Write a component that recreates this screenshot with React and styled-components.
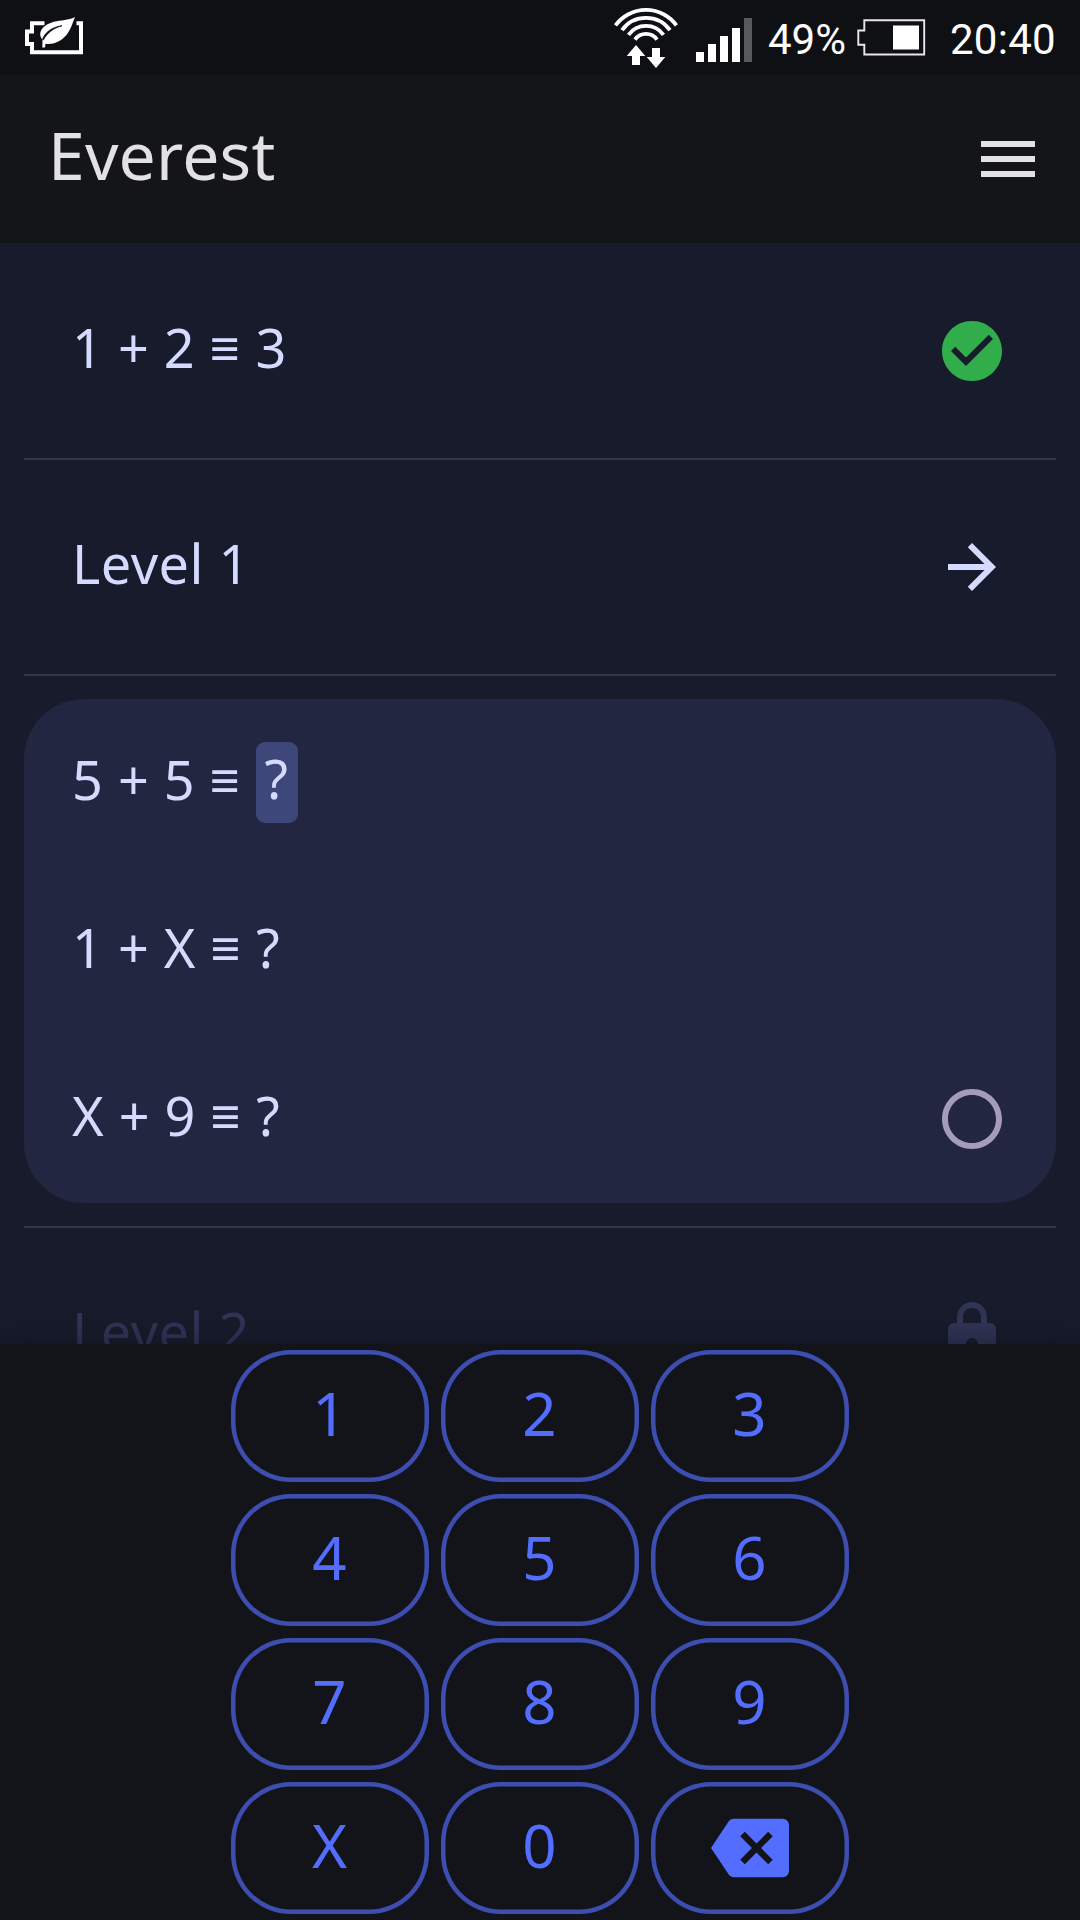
import React from 'react';
import styled, { createGlobalStyle } from 'styled-components';

const GlobalStyle = createGlobalStyle`
  * { box-sizing: border-box; }
  body { margin: 0; background: #131419; }
  svg { display: block; }
`;

const Screen = styled.div`
  width: 1080px;
  height: 1920px;
  overflow: hidden;
  display: flex;
  flex-direction: column;
  background: #181b2b;
  font-family: 'Noto Sans', 'Open Sans', sans-serif;
`;

const StatusBar = styled.div`
  flex: none;
  height: 75px;
  padding: 0 24px 0 24px;
  display: flex;
  align-items: flex-start;
  justify-content: space-between;
  background: #0f1014;
  color: #fff;
`;

const StatusGroup = styled.div`
  display: flex;
  align-items: flex-start;
`;

const StatusText = styled.span`
  font: 400 42px/50px Roboto, sans-serif;
  letter-spacing: ${(p) => p.$tracking || 0}px;
  margin: 15px ${(p) => p.$after || 0}px 0 ${(p) => p.$before}px;
  white-space: pre;
`;

const AppBar = styled.header`
  flex: none;
  height: 168px;
  padding: 0 36px 0 48px;
  display: flex;
  align-items: center;
  justify-content: space-between;
  background: #141519;
`;

const Title = styled.h1`
  margin: 0 0 11px;
  font-size: 66px;
  font-weight: 400;
  line-height: 90px;
  letter-spacing: 0.2px;
  color: #e3e2e3;
`;

const List = styled.main`
  flex: 1;
  min-height: 0;
  overflow: hidden;
`;

const Row = styled.div`
  height: ${(p) => (p.$nested ? 168 : 216)}px;
  padding: 0 48px;
  margin: 0 ${(p) => (p.$nested ? 0 : 24)}px;
  display: flex;
  align-items: center;
  justify-content: space-between;
  color: ${(p) => (p.$locked ? '#303455' : '#d5dbff')};
`;

const Label = styled.span`
  font-size: 54px;
  line-height: 74px;
  letter-spacing: 0.5px;
  padding-bottom: 8px;
  white-space: pre;
`;

const Equiv = styled.span`
  font-size: 51px;
  line-height: 0;
  margin: 0 0.7px 0 0.3px;
  vertical-align: 2px;
`;

const Cursor = styled.span`
  display: inline-block;
  height: 81px;
  line-height: 74px;
  padding: 0 9px;
  margin: 0 0 -7px;
  border-radius: 9px;
  background: #3e4779;
  vertical-align: top;
`;

const CursorText = styled.span`
  display: block;
  margin-top: -1px;
`;

const Divider = styled.div`
  height: 2px;
  margin: -1px 24px;
  background: #343646;
`;

const Card = styled.section`
  margin: 24px;
  border-radius: 60px;
  background: #232640;
`;

const Keypad = styled.footer`
  flex: none;
  height: 576px;
  padding: 6px 0;
  display: grid;
  grid-template-columns: repeat(3, 198px);
  grid-auto-rows: 132px;
  gap: 12px;
  justify-content: center;
  background: #131419;
  box-shadow: 0 0 24px rgba(10, 11, 24, 0.5);
`;

const Key = styled.button`
  border: 0;
  padding: 0 1px 7px 0;
  display: flex;
  align-items: center;
  justify-content: center;
  border-radius: 60px;
  background: transparent;
  box-shadow: inset 0 0 0 4.5px #3e4eb0;
  color: #536dfe;
  font: 400 60px/82px 'Noto Sans', 'Open Sans', sans-serif;
`;

const KeyIcon = styled.span`
  margin: 0 -1px -7px 0;
`;

const ICONS = {
  menu: 'M3 18h18v-2H3v2zm0-5h18v-2H3v2zm0-7v2h18V6H3z',
  check:
    'M12 2C6.48 2 2 6.48 2 12s4.48 10 10 10 10-4.48 10-10S17.52 2 12 2zm-2 15l-5-5 1.41-1.41L10 14.17l7.59-7.59L19 8l-9 9z',
  arrow: 'M12 4l-1.41 1.41L16.17 11H4v2h12.17l-5.58 5.59L12 20l8-8z',
  circle:
    'M12 2C6.48 2 2 6.48 2 12s4.48 10 10 10 10-4.48 10-10S17.52 2 12 2zm0 18c-4.42 0-8-3.58-8-8s3.58-8 8-8 8 3.58 8 8-3.58 8-8 8z',
  lock: 'M18 8h-1V6c0-2.76-2.24-5-5-5S7 3.24 7 6v2H6c-1.1 0-2 .9-2 2v10c0 1.1.9 2 2 2h12c1.1 0 2-.9 2-2V10c0-1.1-.9-2-2-2zm-6 9c-1.1 0-2-.9-2-2s.9-2 2-2 2 .9 2 2-.9 2-2 2zM9 8V6c0-1.66 1.34-3 3-3s3 1.34 3 3v2H9z',
  backspace:
    'M22 3H7c-.69 0-1.23.35-1.59.88L0 12l5.41 8.11c.36.53.9.89 1.59.89h15c1.1 0 2-.9 2-2V5c0-1.1-.9-2-2-2zm-3 12.59L17.59 17 14 13.41 10.41 17 9 15.59 12.59 12 9 8.41 10.41 7 14 10.59 17.59 7 19 8.41 15.41 12 19 15.59z',
};

const Icon = ({ name, color = 'currentColor', size = 72 }) => (
  <svg width={size} height={size} viewBox="0 0 24 24" fill={color}>
    <path d={ICONS[name]} />
  </svg>
);

const PowerSaver = () => (
  <svg width="60" height="75" viewBox="24 0 60 75" fill="none">
    <path d="M44.500 23.200H32V31.500H27V44H32V52.200H81V23.200H76.500" stroke="#fff" strokeWidth="4" />
    <path
      d="M75 17C68 20.500 61 20 54 21.800C44 24.500 39 30 40.500 36.500L42.500 40L42.300 47.500H45L45.500 43.800C53 44.800 60 42 66 35.500C70.500 30.500 72.500 23 75 17Z"
      fill="#fff"
      stroke="#0f1014"
      strokeWidth="1.6"
      paintOrder="stroke"
    />
    <path d="M42.500 39.500C45 32.500 51 27.500 62 25.700C53 28.500 47.500 32.500 43.500 39.800Z" fill="#0f1014" stroke="#0f1014" strokeWidth="0.8" />
  </svg>
);

const arc = (r) => `M${646 - 0.81 * r} ${47.6 - 0.59 * r}A${r} ${r} 0 0 1 ${646 + 0.81 * r} ${47.6 - 0.59 * r}`;

const Wifi = () => (
  <svg width="66" height="75" viewBox="613 0 66 75">
    <g fill="none" stroke="#fff" strokeWidth="3.8">
      {[37.6, 29.6, 21.6, 13.6].map((r) => (
        <path key={r} d={arc(r)} />
      ))}
    </g>
    <path d="M636 45L645.300 56H640V65H632V56H626.700ZM652 48H660V57H665.300L656 68L646.700 57H652Z" fill="#fff" />
  </svg>
);

const Signal = () => (
  <svg width="73" height="75" viewBox="679 0 73 75" fill="#fff">
    <path d="M696 52h8v10h-8zM708 44h8v18h-8zM720 36h8v26h-8zM732 28h8v34h-8z" />
    <path d="M744 18h8v44h-8z" fill="#58595c" />
  </svg>
);

const Battery = () => (
  <svg width="70" height="75" viewBox="856 0 70 75">
    <path d="M864.300 20.300H924.200V54.500H864.300V44.700H858.300V30.500H864.300Z" fill="none" stroke="#e9e7ea" strokeWidth="1.9" />
    <path d="M893 25.500h26v24h-26z" fill="#fff" />
  </svg>
);

const Equation = ({ left, right, active }) => (
  <Label>
    {left} <Equiv>≡</Equiv>{' '}
    {active ? (
      <Cursor>
        <CursorText>{right}</CursorText>
      </Cursor>
    ) : (
      right
    )}
  </Label>
);

const KEYS = ['1', '2', '3', '4', '5', '6', '7', '8', '9', 'X', '0'];

export default function App() {
  return (
    <>
      <GlobalStyle />
      <Screen>
        <StatusBar>
          <PowerSaver />
          <StatusGroup>
            <Wifi />
            <Signal />
            <StatusText $before={16} $after={10}>49%</StatusText>
            <Battery />
            <StatusText $before={24} $tracking={0.3}>20:40</StatusText>
          </StatusGroup>
        </StatusBar>
        <AppBar>
          <Title>Everest</Title>
          <Icon name="menu" color="#e3e2e3" />
        </AppBar>
        <List>
          <Row>
            <Equation left="1 + 2" right="3" />
            <Icon name="check" color="#31ae4b" />
          </Row>
          <Divider />
          <Row>
            <Label>Level 1</Label>
            <Icon name="arrow" />
          </Row>
          <Divider />
          <Card>
            <Row $nested>
              <Equation left="5 + 5" right="?" active />
            </Row>
            <Row $nested>
              <Equation left="1 + X" right="?" />
            </Row>
            <Row $nested>
              <Equation left="X + 9" right="?" />
              <Icon name="circle" color="#a49cb8" />
            </Row>
          </Card>
          <Divider />
          <Row $locked>
            <Label>Level 2</Label>
            <Icon name="lock" />
          </Row>
        </List>
        <Keypad>
          {KEYS.map((k) => (
            <Key key={k}>{k}</Key>
          ))}
          <Key aria-label="Backspace">
            <KeyIcon>
              <Icon name="backspace" size={78} />
            </KeyIcon>
          </Key>
        </Keypad>
      </Screen>
    </>
  );
}
